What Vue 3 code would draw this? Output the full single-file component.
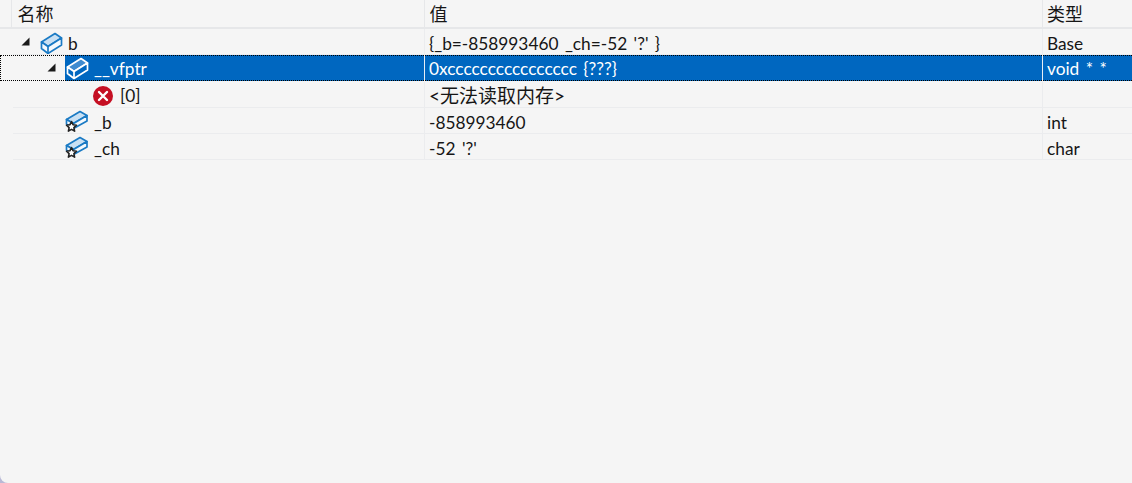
<script setup>
const rows = [
  { depth: 0, name: 'b', value: "{_b=-858993460 _ch=-52 '?' }", type: 'Base', icon: 'box', toggle: true },
  { depth: 1, name: '__vfptr', value: '0xcccccccccccccccc {???}', type: 'void * *', icon: 'box', toggle: true, selected: true },
  { depth: 2, name: '[0]', value: '<无法读取内存>', type: '', icon: 'error', cjk: true },
  { depth: 1, name: '_b', value: '-858993460', type: 'int', icon: 'member' },
  { depth: 1, name: '_ch', value: "-52 '?'", type: 'char', icon: 'member' }
]
</script>

<template>
  <div class="watch">
    <div class="head">
      <div class="gutter"></div>
      <div class="hcell name">名称</div>
      <div class="hcell value">值</div>
      <div class="hcell type">类型</div>
    </div>
    <div v-for="row in rows" :key="row.name" class="row" :class="{ selected: row.selected }">
      <div class="cell name tree">
        <span class="indent" :style="{ width: 26 * row.depth + 'px' }"></span>
        <span class="toggle">
          <svg v-if="row.toggle" width="9" height="9" viewBox="0 0 9 9"><path d="M8.5 0.5V8.5H0.5Z" fill="#1a1a1a" /></svg>
        </span>
        <span class="node">
          <span class="icon">
            <svg v-if="row.icon === 'box'" width="24" height="23" viewBox="0 0 24 23" class="box">
              <path class="top" d="M2.5 10L16 1.5L22.5 6L9 14.5Z" />
              <path class="side" d="M2.5 10V16.5L9 21.5L22.5 13V6L9 14.5Z" />
              <path class="edge" d="M9 14.5V21.5" />
            </svg>
            <svg v-else-if="row.icon === 'error'" width="20" height="20" viewBox="0 0 20 20" class="err">
              <circle cx="10" cy="10" r="10" fill="#c50f23" />
              <path d="M6 6L14 14M14 6L6 14" stroke="#fff" stroke-width="2.4" stroke-linecap="round" />
            </svg>
            <svg v-else width="24" height="23" viewBox="0 0 24 23" class="box member">
              <path class="top" d="M1.5 9.5L15 1.5L22 5.5L8.5 13.5Z" />
              <path class="side" d="M1.5 9.5V14L8.5 18.5L22 11V5.5L8.5 13.5Z" />
              <path d="M6.5 11.5l1.5 3.2 3.5.5-2.6 2.4.7 3.5-3.1-1.7-3.1 1.7.7-3.5-2.6-2.4 3.5-.5Z" fill="#fff" stroke="#222" stroke-width="1.6" stroke-linejoin="round" />
            </svg>
          </span>
          <span class="label">{{ row.name }}</span>
        </span>
      </div>
      <div class="cell value" :class="{ cjk: row.cjk }">{{ row.value }}</div>
      <div class="cell type">{{ row.type }}</div>
    </div>
  </div>
</template>

<style scoped>
.watch {
  width: 1132px;
  height: 483px;
  background: #f5f5f5;
  border-bottom-left-radius: 8px;
  overflow: hidden;
  color: #161616;
  font-family: "Lato", "Noto Sans CJK SC", sans-serif;
  font-size: 17.3px;
  word-spacing: 2px;
}
.head {
  display: flex;
  height: 29px;
  border-bottom: 2px solid #e6e7e9;
  box-sizing: border-box;
}
.gutter {
  width: 12px;
  border-right: 1px solid #e6e7e9;
  box-sizing: border-box;
  flex: none;
}
.hcell {
  box-sizing: border-box;
  line-height: 27px;
  font-size: 18px;
  border-right: 1px solid #e6e7e9;
  font-family: "Noto Sans CJK SC", sans-serif;
}
.hcell.name { width: 413px; flex: none; padding-left: 5.5px; }
.hcell.value { width: 618px; flex: none; padding-left: 4.5px; }
.hcell.type { flex: 1; border-right: 0; padding-left: 4px; }

.row {
  display: flex;
  height: 26px;
  box-sizing: border-box;
  margin-left: 13px;
  border-bottom: 1px solid #ebecee;
  line-height: 29px;
  white-space: nowrap;
}
.row.selected {
  position: relative;
  color: #fff;
  border-bottom: 0;
  margin-left: 0;
  padding-left: 13px;
  line-height: 28px;
}
.row.selected::after {
  content: "";
  position: absolute;
  inset: 0;
  border-top: 1px dotted #000;
  border-bottom: 1px dotted #000;
  border-left: 1px dotted #000;
  pointer-events: none;
}
.row.selected + .row {
  height: 27px;
  padding-top: 1px;
  line-height: 28px;
}
.row:first-of-type { margin-left: 0; }
.cell {
  box-sizing: border-box;
  border-right: 1px solid #ebecee;
  padding-left: 5px;
  flex: none;
  overflow: hidden;
}
.cell.name { width: 412px; }
.cell.value { width: 618px; padding-left: 4px; }
.cell.type { flex: 1; border-right: 0; padding-left: 4px; }
.cjk { font-size: 19px; padding-left: 5px; }

.tree {
  display: flex;
  align-items: stretch;
  padding-left: 7px;
}
.indent { flex: none; }
.toggle {
  flex: none;
  width: 19px;
  display: flex;
  align-items: flex-start;
  padding-left: 1px;
  padding-top: 8px;
  box-sizing: border-box;
}
.node {
  flex: 1;
  display: flex;
  align-items: flex-start;
  min-width: 0;
}
.icon {
  flex: none;
  width: 29px;
  height: 24px;
  margin-top: 3px;
  display: flex;
  align-items: flex-start;
}
.selected .icon { margin-top: 2px; }
.err { margin-left: 2px; margin-top: 1px; }
.member { margin-top: -1px; }
.box .top { fill: #c9e0f3; stroke: #1a7ac4; stroke-width: 1.7; stroke-linejoin: round; }
.box .side { fill: #f5f9fd; stroke: #1a7ac4; stroke-width: 1.7; stroke-linejoin: round; }
.box .edge { fill: none; stroke: #1a7ac4; stroke-width: 1.7; }

.selected .cell.value, .selected .cell.type { background: #0067c0; }
.selected .cell.value { border-right-color: #e8eef5; border-left: 1px solid #e8eef5; width: 619px; margin-left: -1px; }
.selected .tree { border-right: 0; }
.selected .node { background: #0067c0; }
.selected .box .top { fill: #3f8bd0; stroke: #fff; }
.selected .box .side { fill: #0067c0; stroke: #fff; }
.selected .box .edge { stroke: #fff; }
</style>

<style>
html, body { background: #b9b9d6; }
</style>
